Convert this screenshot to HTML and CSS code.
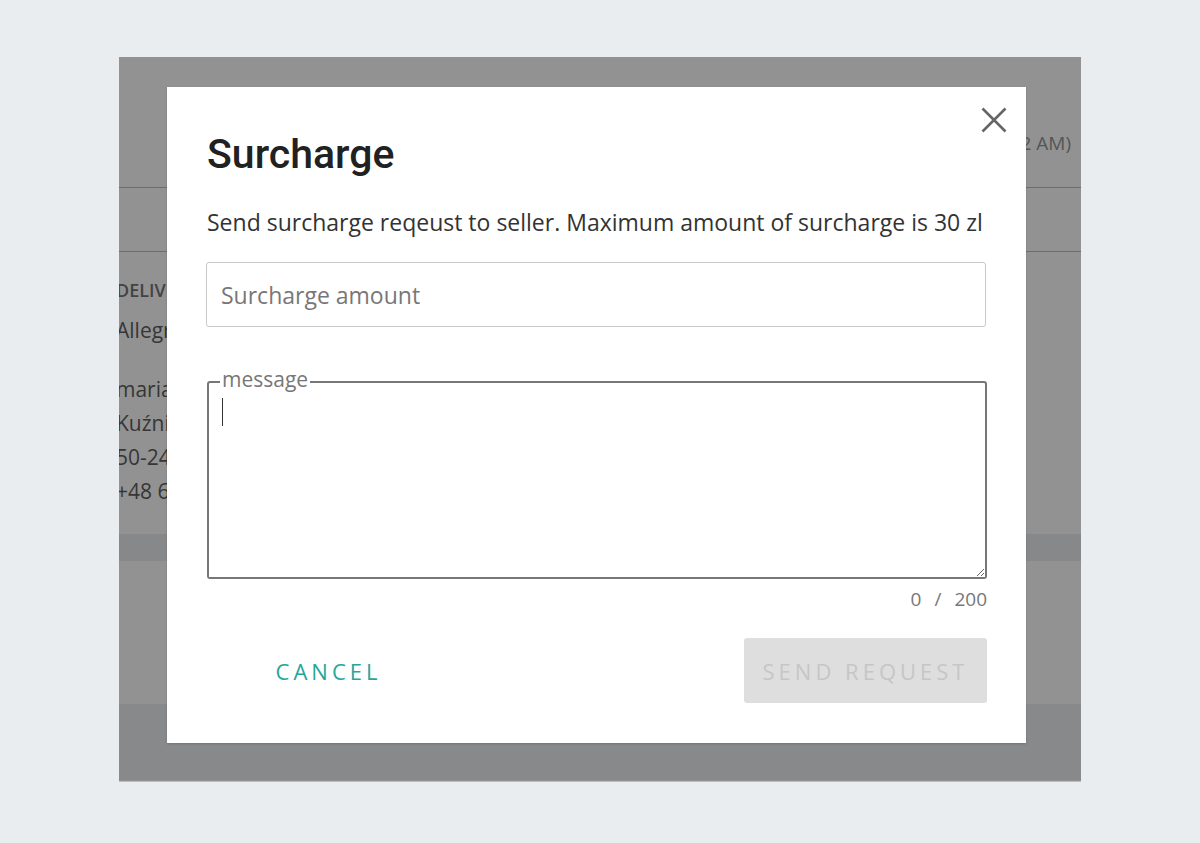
FILE: index.html
```html
<!DOCTYPE html>
<html lang="en">
<head>
  <meta charset="UTF-8">
  <title>Surcharge</title>
  <meta name="viewport" content="width=device-width, initial-scale=1.0">
  <link rel="stylesheet" href="styles.css">
</head>
<body>
  <div class="frame">
    <div class="order-head">
      <span class="order-date">12.03.2024 (10:42 AM)</span>
    </div>
    <div class="order-row"></div>
    <div class="order-details">
      <div class="detail-label">DELIVERY ADDRESS</div>
      <div class="detail-method">Allegro One Box</div>
      <div class="detail-lines">
        <div>maria nowak</div>
        <div>Kuźnicza 12</div>
        <div>50-240 Wrocław</div>
        <div>+48 600 123 456</div>
      </div>
    </div>
    <div class="band"></div>
    <div class="order-body"></div>
    <div class="order-foot"></div>

    <div class="modal">
      <button class="close-btn" aria-label="Close">
        <svg width="26" height="26" viewBox="0 0 26 26">
          <path d="M1.5 1.5 L24.5 24.5 M24.5 1.5 L1.5 24.5" stroke="#666" stroke-width="2.6" fill="none"/>
        </svg>
      </button>
      <h2>Surcharge</h2>
      <p class="lead">Send surcharge reqeust to seller. Maximum amount of surcharge is 30 zl</p>
      <input class="amount" type="text" placeholder="Surcharge amount">

      <fieldset class="msg-box">
        <legend>message</legend>
        <div class="msg-wrap">
          <textarea class="msg-input" maxlength="200"></textarea>
          <span class="caret"></span>
        </div>
      </fieldset>
      <div class="counter"><span>0</span><span>/</span><span>200</span></div>

      <div class="actions">
        <button class="cancel-btn">CANCEL</button>
        <button class="send-btn" disabled>SEND REQUEST</button>
      </div>
    </div>
  </div>
</body>
</html>
```

FILE: styles.css
```css
body {
  margin: 0;
  padding: 0;
  background: #e9edf0;
  font-family: "Open Sans", sans-serif;
  color: #333;
}
.frame {
  position: relative;
  width: 962px;
  height: 724px;
  margin: 57px 0 0 119px;
  background: #929292;
  border-bottom: 1px solid #bcbec0;
  overflow: hidden;
}
.order-head {
  height: 131px;
  box-sizing: border-box;
  padding: 73px 10px 0 0;
  text-align: right;
  border-bottom: 1px solid #6d6d6d;
}
.order-date {
  font-size: 19px;
  line-height: 26px;
  color: #555;
}
.order-row {
  height: 63px;
  border-bottom: 1px solid #6d6d6d;
}
.order-details {
  height: 282px;
  box-sizing: border-box;
  padding: 26px 0 0 0;
  margin-left: -3px;
  white-space: nowrap;
}
.detail-label {
  font-size: 18px;
  font-weight: 600;
  line-height: 24px;
  color: #434343;
}
.detail-method {
  margin-top: 14px;
  font-size: 21px;
  line-height: 28px;
  color: #363636;
}
.detail-lines {
  margin-top: 28px;
  font-size: 21px;
  line-height: 34px;
  color: #363636;
}
.band {
  height: 27px;
  background: #87888a;
}
.order-body {
  height: 143px;
}
.order-foot {
  height: 76px;
  background: #88898b;
}

.modal {
  position: absolute;
  left: 48px;
  top: 30px;
  width: 859px;
  box-sizing: border-box;
  padding: 43px 39px 40px 40px;
  background: #fff;
  box-shadow: 0 1px 2px rgba(0,0,0,0.15);
}
.close-btn {
  position: absolute;
  top: 20px;
  right: 19px;
  padding: 0;
  border: none;
  background: none;
  cursor: pointer;
  line-height: 0;
}
.modal h2 {
  margin: 0;
  font-family: Roboto, sans-serif;
  font-size: 41px;
  line-height: 48px;
  font-weight: 500;
  color: #212121;
}
.lead {
  margin: 28px 0 0;
  font-size: 23px;
  line-height: 32px;
  color: #333;
}
.amount {
  display: block;
  width: 100%;
  height: 65px;
  margin-top: 24px;
  margin-left: -1px;
  box-sizing: border-box;
  padding: 0 14px;
  border: 1px solid #c9c9c9;
  border-radius: 3px;
  font-family: "Open Sans", sans-serif;
  font-size: 23px;
  color: #333;
  outline: none;
}
.amount::placeholder {
  color: #777;
}
.msg-box {
  margin: 38px 0 0;
  padding: 0;
  border: 2px solid #777;
  border-radius: 3px;
  min-width: 0;
}
.msg-box legend {
  margin-left: 11px;
  padding: 0 2px 6px;
  font-size: 21px;
  line-height: 28px;
  color: #777;
}
.msg-wrap {
  position: relative;
}
.msg-input {
  display: block;
  width: 100%;
  height: 178px;
  box-sizing: border-box;
  padding: 0 13px;
  border: none;
  outline: none;
  font-family: "Open Sans", sans-serif;
  font-size: 23px;
  line-height: 30px;
  color: #333;
}
.caret {
  position: absolute;
  left: 13px;
  top: -1px;
  width: 1px;
  height: 28px;
  background: #333;
}
.counter {
  display: flex;
  justify-content: flex-end;
  gap: 13px;
  margin-top: 7px;
  font-size: 19px;
  line-height: 26px;
  color: #777;
}
.actions {
  display: flex;
  justify-content: space-between;
  margin-top: 26px;
}
.cancel-btn,
.send-btn {
  width: 243px;
  height: 65px;
  border: none;
  border-radius: 3px;
  font-family: "Open Sans", sans-serif;
  font-size: 22px;
  letter-spacing: 4px;
  cursor: pointer;
}
.cancel-btn {
  background: none;
  color: #26a69a;
}
.send-btn {
  background: #dedede;
  color: #c6c6c6;
  cursor: default;
}
```
